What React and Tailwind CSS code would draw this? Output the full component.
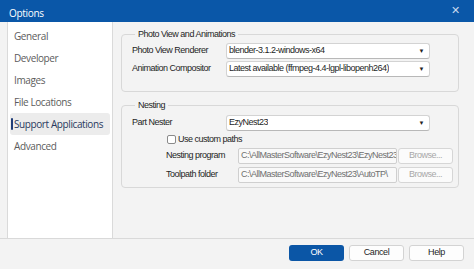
import React from 'react';

const navItems = ['General', 'Developer', 'Images', 'File Locations', 'Support Applications', 'Advanced'];

const Dropdown = ({ value }) => (
    <div className="w-[204px] h-[16px] bg-white border border-[#d3d3d3] border-b-[#b8b8b8] rounded-[3px] flex items-center justify-between pl-[2px] pr-[5px]">
        <span className="truncate">{value}</span>
        <span className="text-[6px] text-[#222]">▼</span>
    </div>
);

const PathRow = ({ label, path }) => (
    <div className="flex items-center h-[16px]">
        <span className="w-[72px] pl-[34px] box-content whitespace-nowrap">{label}</span>
        <div className="w-[159px] h-[16px] bg-[#f9f9f9] border border-[#cfcfcf] rounded-[2px] flex items-center px-[2px] text-[#6f6f6f] whitespace-nowrap overflow-hidden">
            {path}
        </div>
        <button className="ml-[1px] w-[55px] h-[16px] bg-[#fbfbfb] border border-[#d6d6d6] rounded-[3px] text-[#a8a8a8]">Browse...</button>
    </div>
);

const App = () => {
    return (
        <div className="w-[474px] h-[269px] flex flex-col bg-[#f3f3f3] overflow-hidden" style={{ fontFamily: '"Liberation Sans", Arial, sans-serif' }}>
            <div className="h-[22px] bg-[#0a57a8] flex items-end justify-between pl-[9px] pr-[14px] text-white">
                <span className="text-[10px] font-medium tracking-[-0.3px] leading-[14px] pb-[2px]" style={{ fontFamily: '"Open Sans", sans-serif' }}>Options</span>
                <span className="text-[11px] leading-[12px] pb-[6px] text-[#c7d8ee]">✕</span>
            </div>

            <div className="h-[217px] flex border-b border-[#d9d9d9]">
                <div className="ml-[7px] w-[106px] bg-white border-x border-[#dadada] pt-[3px] px-[2px]" style={{ fontFamily: '"Open Sans", sans-serif' }}>
                    {navItems.map((item) => {
                        const active = item === 'Support Applications';
                        return (
                            <div key={item} className={`h-[22px] flex items-center rounded-[3px] text-[10px] tracking-[-0.4px] whitespace-nowrap ${active ? 'bg-[#ececec] text-[#2a3a5e]' : 'text-[#5c5c5c]'}`}>
                                <span className={`ml-[1px] w-[2px] h-[12px] rounded-[1px] ${active ? 'bg-[#1f3c78]' : 'bg-transparent'}`}></span>
                                <span className="ml-[1px]">{item}</span>
                            </div>
                        );
                    })}
                </div>

                <div className="flex-1 pl-[8px] pt-[6px] text-[9px] tracking-[-0.5px] text-[#1e1e1e]">
                    <fieldset className="w-[338px] border border-[#d8d8d8] rounded-[4px] pl-[10px] pt-[3px] pb-[14px] flex flex-col gap-[2px]">
                        <legend className="ml-[3px] px-[3px] h-[12px] leading-[12px]">Photo View and Animations</legend>
                        <div className="flex items-center">
                            <span className="w-[94px]">Photo View Renderer</span>
                            <Dropdown value="blender-3.1.2-windows-x64" />
                        </div>
                        <div className="flex items-center">
                            <span className="w-[94px]">Animation Compositor</span>
                            <Dropdown value="Latest available (ffmpeg-4.4-lgpl-libopenh264)" />
                        </div>
                    </fieldset>

                    <fieldset className="mt-[7px] w-[338px] border border-[#d8d8d8] rounded-[4px] pl-[10px] pt-[4px] pb-[4px] flex flex-col">
                        <legend className="ml-[3px] px-[3px] h-[12px] leading-[12px]">Nesting</legend>
                        <div className="flex items-center">
                            <span className="w-[94px]">Part Nester</span>
                            <Dropdown value="EzyNest23" />
                        </div>
                        <div className="h-[17px] flex items-center pl-[35px]">
                            <span className="w-[9px] h-[9px] bg-white border border-[#8a8a8a] rounded-[2px]"></span>
                            <span className="ml-[2px]">Use custom paths</span>
                        </div>
                        <div className="flex flex-col gap-[3px]">
                            <PathRow label="Nesting program" path="C:\AllMasterSoftware\EzyNest23\EzyNest23" />
                            <PathRow label="Toolpath folder" path="C:\AllMasterSoftware\EzyNest23\AutoTP\" />
                        </div>
                    </fieldset>
                </div>
            </div>

            <div className="flex-1 flex justify-end items-start pt-[6px] pr-[10px] gap-[5px] text-[9px] tracking-[-0.4px]">
                <button className="w-[55px] h-[16px] rounded-[3px] bg-[#0b56a6] text-white">OK</button>
                <button className="w-[55px] h-[16px] rounded-[3px] bg-[#fdfdfd] border border-[#d3d3d3] text-[#1e1e1e]">Cancel</button>
                <button className="w-[55px] h-[16px] rounded-[3px] bg-[#fdfdfd] border border-[#d3d3d3] text-[#1e1e1e]">Help</button>
            </div>
        </div>
    );
};

export default App;
